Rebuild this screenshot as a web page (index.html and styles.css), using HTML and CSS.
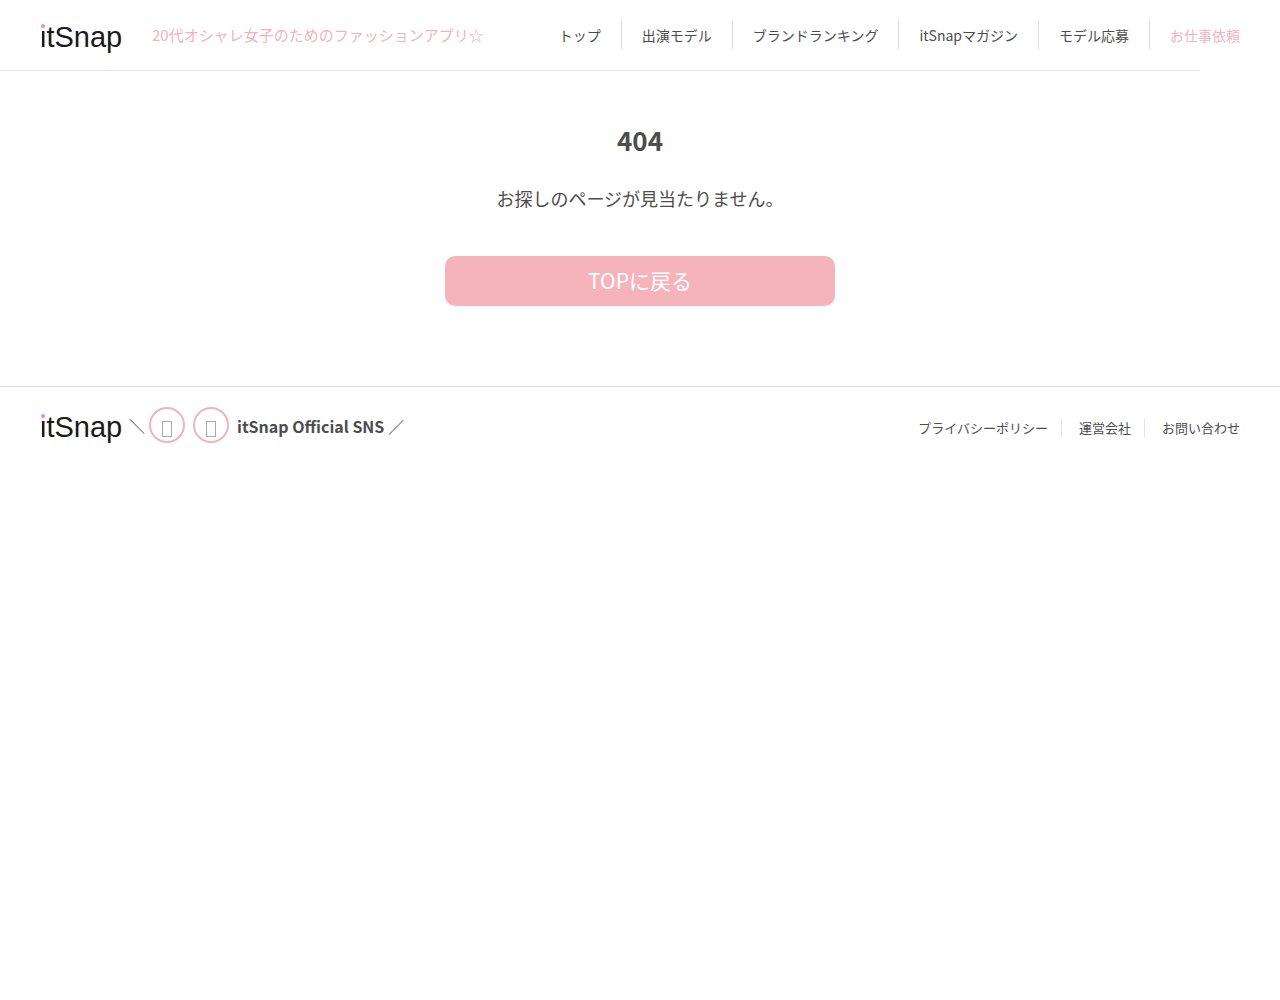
FILE: index.html
```html
<!DOCTYPE html>
<html lang="ja">
<head>
    <meta charset="UTF-8">
    <meta name="viewport" content="width=device-width, initial-scale=1.0">
    <title>404 | itSnap</title>
    <link rel="stylesheet" href="styles.css">
</head>
<body>
    <header>
        <div class="header-inner">
            <a class="logo" href="#"><span class="logo-i">i</span>tSnap</a>
            <p class="tagline">20代オシャレ女子のためのファッションアプリ☆</p>
            <nav>
                <ul class="nav-list">
                    <li><a href="#">トップ</a></li>
                    <li><a href="#">出演モデル</a></li>
                    <li><a href="#">ブランドランキング</a></li>
                    <li><a href="#">itSnapマガジン</a></li>
                    <li><a href="#">モデル応募</a></li>
                    <li><a class="request" href="#">お仕事依頼</a></li>
                </ul>
            </nav>
        </div>
    </header>
    <main>
        <h1>404</h1>
        <p>お探しのページが見当たりません。</p>
        <a class="back-button" href="#">TOPに戻る</a>
    </main>
    <footer>
        <a class="logo" href="#"><span class="logo-i">i</span>tSnap</a>
        <div class="sns">
            <span>＼</span>
            <a class="sns-icon" href="#" aria-label="Twitter">
                <svg width="10" height="16" viewBox="0 0 10 16"><rect x="0.5" y="0.5" width="9" height="15"/></svg>
            </a>
            <a class="sns-icon" href="#" aria-label="Instagram">
                <svg width="10" height="16" viewBox="0 0 10 16"><rect x="0.5" y="0.5" width="9" height="15"/></svg>
            </a>
            <p><strong>itSnap Official SNS</strong> ／</p>
        </div>
        <ul class="footer-list">
            <li><a href="#">プライバシーポリシー</a></li>
            <li><a href="#">運営会社</a></li>
            <li><a href="#">お問い合わせ</a></li>
        </ul>
    </footer>
</body>
</html>
```
FILE: styles.css
```css
* {
    box-sizing: border-box;
}
body {
    margin: 0;
    background: #fff;
    color: #4d4d4d;
    font-family: "Noto Sans CJK JP", sans-serif;
    font-size: 16px;
    line-height: 24px;
}
a {
    color: inherit;
    text-decoration: none;
}
p, ul {
    margin: 0;
    padding: 0;
}
ul {
    display: flex;
    list-style: none;
}
header {
    width: calc(100% - 80px);
    border-bottom: 1px solid #e6e6e6;
}
.header-inner {
    display: flex;
    align-items: center;
    height: 70px;
    margin-right: -80px;
    padding: 0 40px;
}
.logo {
    position: relative;
    width: 82px;
    padding-top: 3px;
    color: #1a1a1a;
    font-family: "Liberation Sans", Arial, sans-serif;
    font-size: 29px;
    line-height: 32px;
    white-space: nowrap;
}
.logo-i {
    background: linear-gradient(#e38fcb 9px, #1a1a1a 9px);
    -webkit-background-clip: text;
    background-clip: text;
    color: transparent;
}
/* round dot of the i */
.logo::before {
    content: "";
    position: absolute;
    top: 6px;
    left: 1px;
    width: 4px;
    height: 4px;
    border-radius: 50%;
    background: #e38fcb;
}
.tagline {
    margin-left: 30px;
    color: #f0b4c0;
    font-size: 15px;
    white-space: nowrap;
}
nav {
    margin-left: auto;
}
.nav-list {
    font-size: 14px;
    line-height: 28px;
    white-space: nowrap;
}
.nav-list li + li {
    margin-left: 20px;
    padding-left: 20px;
    border-left: 1px solid #ddd;
}
.nav-list .request {
    color: #f0b4c0;
}
main {
    padding: 49px 20px 80px;
    text-align: center;
}
h1 {
    margin: 0;
    font-size: 26px;
    line-height: 40px;
}
main p {
    margin: 24px 0 44px;
    font-size: 18px;
    line-height: 28px;
}
.back-button {
    display: block;
    max-width: 390px;
    margin: 0 auto;
    padding-bottom: 2px;
    border-radius: 10px;
    background: #f5b3bb;
    color: #fff;
    font-size: 21px;
    line-height: 48px;
}
footer {
    display: flex;
    align-items: center;
    padding: 20px 40px;
    border-top: 1px solid #ddd;
}
.sns {
    display: flex;
    align-items: center;
    gap: 8px;
    margin-left: 7px;
}
.sns span {
    margin-right: -4px;
}
.sns p {
    padding-top: 2px;
}
.sns-icon {
    display: flex;
    align-items: flex-end;
    justify-content: center;
    width: 36px;
    height: 36px;
    padding-bottom: 4px;
    border: 2px solid #ecb5c2;
    border-radius: 50%;
}
.sns-icon svg {
    fill: none;
    stroke: #aaa;
}
.footer-list {
    margin-left: auto;
    padding-top: 5px;
    font-size: 13px;
    line-height: 20px;
    white-space: nowrap;
}
.footer-list li + li {
    margin-left: 13px;
    padding-left: 17px;
    border-left: 1px solid #e6e6e6;
}
```
